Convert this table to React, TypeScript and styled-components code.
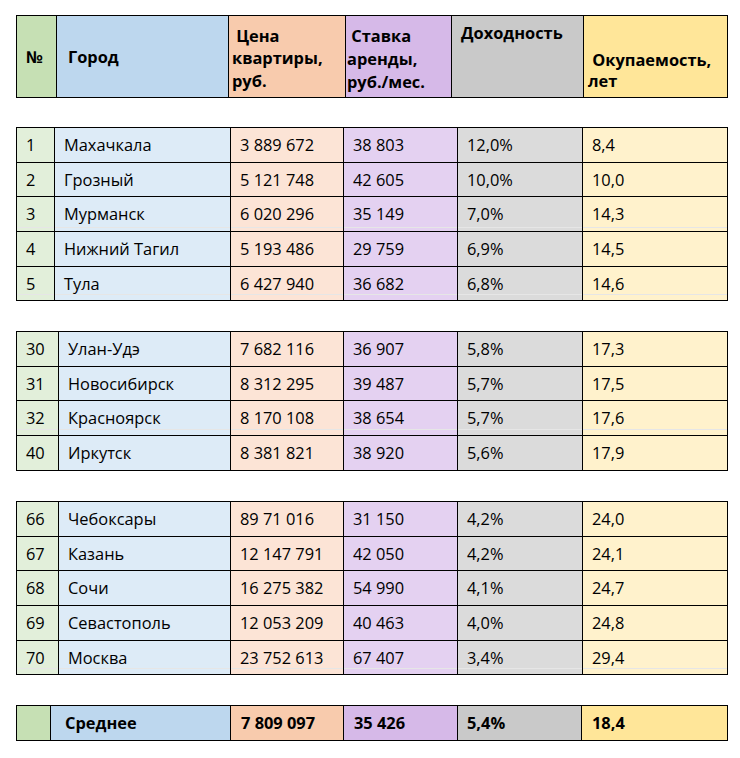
import React from "react";
import styled, { createGlobalStyle } from "styled-components";

const GlobalStyle = createGlobalStyle`
  html, body { margin: 0; padding: 0; background: #ffffff; }
  body { font-family: "Open Sans", "Noto Sans", sans-serif; color: #000; }
`;

const HEAD = ["#C6E0B4", "#BDD7EE", "#F8CBAD", "#D6B9E8", "#C9C9C9", "#FFE699"];
const LIGHT = ["#E2EFDA", "#DDEBF7", "#FCE4D6", "#E4D1F1", "#DBDBDB", "#FFF2CC"];

const Page = styled.div`
  display: flex;
  flex-direction: column;
  gap: 30px;
  padding: 15px 0 0 16px;
  width: 712px;
`;

const Table = styled.div<{ $cols: string; $rows: string }>`
  display: grid;
  grid-template-columns: ${(p) => p.$cols};
  grid-template-rows: ${(p) => p.$rows};
  gap: 1px;
  padding: 1px;
  background: #000;
  width: 712px;
  box-sizing: border-box;
`;

const HeaderTable = styled(Table)`
  margin-bottom: -1px;
`;

const HeaderCell = styled.div<{ $bg: string; $valign: "start" | "center" | "end"; $pl: number; $lh: number; $pt?: number; $pb?: number }>`
  background: ${(p) => p.$bg};
  display: flex;
  flex-direction: column;
  justify-content: ${(p) => (p.$valign === "start" ? "flex-start" : p.$valign === "end" ? "flex-end" : "center")};
  padding: ${(p) => p.$pt ?? 0}px 2px ${(p) => p.$pb ?? 0}px ${(p) => p.$pl}px;
  font-size: 16.4px;
  font-weight: 700;
  line-height: ${(p) => p.$lh}px;
  white-space: pre;
`;

const Cell = styled.div<{ $bg: string; $seam?: number; $pl?: number; $bold?: boolean }>`
  background: ${(p) =>
    p.$seam
      ? `linear-gradient(to top, ${p.$bg} 0 ${p.$seam}px, rgba(255,255,255,0.9) ${p.$seam}px ${p.$seam + 1}px, ${p.$bg} ${p.$seam + 1}px)`
      : p.$bg};
  display: flex;
  align-items: center;
  padding-left: ${(p) => p.$pl ?? 9}px;
  padding-bottom: 1px;
  font-size: 16.4px;
  font-weight: ${(p) => (p.$bold ? 700 : 400)};
  white-space: nowrap;
  overflow: hidden;
`;

type Row = { cells: string[]; seam?: number };
type Block = { cols: number[]; heights: number[]; rows: Row[] };

const toCols = (c: number[]) => c.map((w) => `${w}px`).join(" ");

const blocks: Block[] = [
  {
    cols: [37, 175, 112, 113, 124, 144],
    heights: [34, 33, 34, 34, 33],
    rows: [
      { cells: ["1", "Махачкала", "3 889 672", "38 803", "12,0%", "8,4"] },
      { cells: ["2", "Грозный", "5 121 748", "42 605", "10,0%", "10,0"] },
      { cells: ["3", "Мурманск", "6 020 296", "35 149", "7,0%", "14,3"], seam: 3 },
      { cells: ["4", "Нижний Тагил", "5 193 486", "29 759", "6,9%", "14,5"] },
      { cells: ["5", "Тула", "6 427 940", "36 682", "6,8%", "14,6"], seam: 5 },
    ],
  },
  {
    cols: [41, 171, 112, 113, 124, 144],
    heights: [34, 33, 34, 34],
    rows: [
      { cells: ["30", "Улан-Удэ", "7 682 116", "36 907", "5,8%", "17,3"] },
      { cells: ["31", "Новосибирск", "8 312 295", "39 487", "5,7%", "17,5"] },
      { cells: ["32", "Красноярск", "8 170 108", "38 654", "5,7%", "17,6"], seam: 5 },
      { cells: ["40", "Иркутск", "8 381 821", "38 920", "5,6%", "17,9"] },
    ],
  },
  {
    cols: [41, 171, 112, 113, 124, 144],
    heights: [34, 33, 34, 34, 33],
    rows: [
      { cells: ["66", "Чебоксары", "89 71 016", "31 150", "4,2%", "24,0"] },
      { cells: ["67", "Казань", "12 147 791", "42 050", "4,2%", "24,1"] },
      { cells: ["68", "Сочи", "16 275 382", "54 990", "4,1%", "24,7"] },
      { cells: ["69", "Севастополь", "12 053 209", "40 463", "4,0%", "24,8"] },
      { cells: ["70", "Москва", "23 752 613", "67 407", "3,4%", "29,4"], seam: 5 },
    ],
  },
];

const footer = ["", "Среднее", "7 809 097", "35 426", "5,4%", "18,4"];
const footerPad = [9, 14, 10, 10, 9, 10];

export default function App() {
  return (
    <>
      <GlobalStyle />
      <Page>
        <HeaderTable $cols={toCols([39, 171, 116, 105, 131, 143])} $rows="81px">
          <HeaderCell $bg={HEAD[0]} $valign="center" $pl={9} $lh={22}>№</HeaderCell>
          <HeaderCell $bg={HEAD[1]} $valign="center" $pl={11} $lh={22}>Город</HeaderCell>
          <HeaderCell $bg={HEAD[2]} $valign="center" $pl={3} $lh={22.5} $pt={4}>
            {" Цена\nквартиры,\nруб."}
          </HeaderCell>
          <HeaderCell $bg={HEAD[3]} $valign="center" $pl={1} $lh={23} $pt={4}>
            {" Ставка\nаренды,\nруб./мес."}
          </HeaderCell>
          <HeaderCell $bg={HEAD[4]} $valign="start" $pl={9} $lh={22} $pt={6}>Доходность</HeaderCell>
          <HeaderCell $bg={HEAD[5]} $valign="end" $pl={4} $lh={21} $pb={6}>
            {" Окупаемость,\nлет"}
          </HeaderCell>
        </HeaderTable>
        {blocks.map((b, bi) => (
          <Table key={bi} $cols={toCols(b.cols)} $rows={b.heights.map((h) => `${h}px`).join(" ")}>
            {b.rows.map((r, ri) =>
              r.cells.map((c, ci) => (
                <Cell key={`${ri}-${ci}`} $bg={LIGHT[ci]} $seam={r.seam}>
                  {c}
                </Cell>
              ))
            )}
          </Table>
        ))}
        <Table $cols={toCols([33, 179, 112, 113, 123, 145])} $rows="34px">
          {footer.map((c, ci) => (
            <Cell key={ci} $bg={HEAD[ci]} $bold $pl={footerPad[ci]}>
              {c}
            </Cell>
          ))}
        </Table>
      </Page>
    </>
  );
}
